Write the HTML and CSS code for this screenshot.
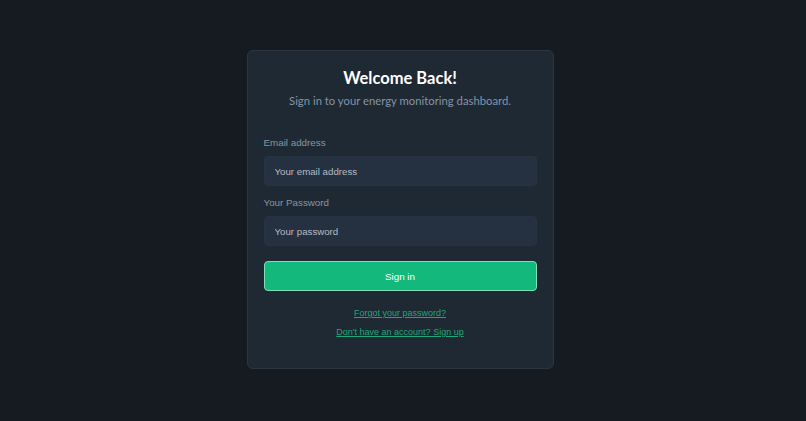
FILE: index.html
```html
<!DOCTYPE html>
<html lang="en">
<head>
<meta charset="utf-8">
<title>Sign in</title>
<link rel="stylesheet" href="styles.css">
</head>
<body>
<main class="page">
  <section class="card">
    <h1 class="title">Welcome Back!</h1>
    <p class="subtitle">Sign in to your energy monitoring dashboard.</p>
    <form class="form">
      <label class="label" for="email">Email address</label>
      <input class="input" id="email" type="email" placeholder="Your email address">
      <label class="label label-gap" for="pw">Your Password</label>
      <input class="input" id="pw" type="password" placeholder="Your password">
      <button class="btn" type="button">Sign in</button>
    </form>
    <div class="links">
      <a class="link" href="#">Forgot your password?</a>
      <a class="link" href="#">Don't have an account? Sign up</a>
    </div>
  </section>
</main>
</body>
</html>
```
FILE: styles.css
```css
html, body {
  margin: 0;
  padding: 0;
  height: 100%;
  background: #161b22;
}
.page {
  height: 100%;
  display: flex;
  align-items: center;
  justify-content: center;
  padding-right: 6px;
  padding-bottom: 2px;
  box-sizing: border-box;
}
.card {
  width: 307px;
  box-sizing: border-box;
  background: #1f2933;
  border: 1px solid #2c3641;
  border-radius: 6px;
  padding: 15px 16px 29px;
  display: flex;
  flex-direction: column;
}
.title {
  margin: 0;
  font-family: Lato, "Noto Sans", sans-serif;
  font-weight: 700;
  font-size: 16.5px;
  line-height: 24px;
  color: #ffffff;
  text-align: center;
}
.subtitle {
  margin: 1px 0 24px;
  font-family: Lato, "Noto Sans", sans-serif;
  font-size: 11.3px;
  line-height: 20px;
  color: #8593a6;
  text-align: center;
}
.form {
  display: flex;
  flex-direction: column;
}
.label {
  font-family: "Liberation Sans", Arial, sans-serif;
  font-size: 9.8px;
  line-height: 16px;
  color: #8b949e;
  margin-bottom: 5px;
}
.label-gap {
  margin-top: 9px;
}
.input {
  height: 30px;
  box-sizing: border-box;
  border: 1px solid #263342;
  border-radius: 4px;
  background: #253140;
  padding: 0 10px;
  font-family: "Liberation Sans", Arial, sans-serif;
  font-size: 9.7px;
  color: #c9d1d9;
  outline: none;
}
.input::placeholder {
  color: #b3bcc6;
}
.btn {
  margin-top: 15px;
  height: 30px;
  border: 1px solid #7fe0b6;
  border-radius: 4px;
  background: #12b87c;
  color: #ffffff;
  font-family: "Liberation Sans", Arial, sans-serif;
  font-size: 9.8px;
  cursor: pointer;
}
.links {
  margin-top: 15px;
  display: flex;
  flex-direction: column;
  align-items: center;
  gap: 5px;
}
.link {
  font-family: "Liberation Sans", Arial, sans-serif;
  font-size: 9px;
  line-height: 14px;
  color: #1fa779;
  text-decoration: underline;
}
```
